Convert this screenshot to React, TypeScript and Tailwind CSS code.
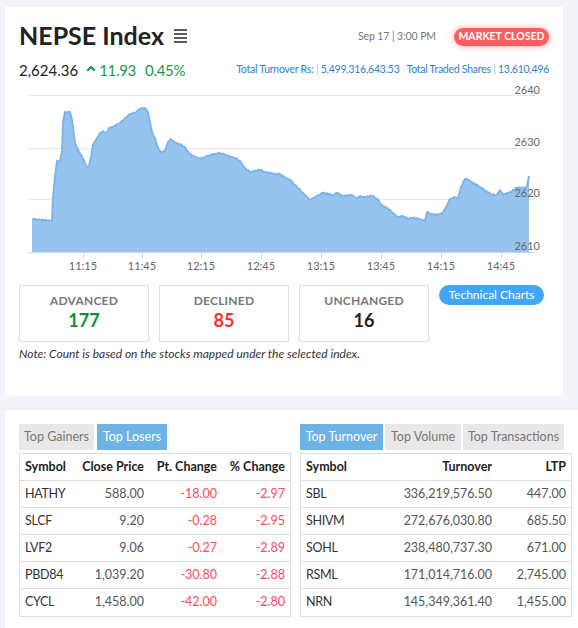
import React from "react";

const points: [number, number][] = [
  [32, 219], [52, 221], [53, 198], [55, 177], [57, 161], [60, 161], [62, 152], [63, 123], [65, 112], [70, 112],
  [72, 120], [75, 143], [78, 150], [82, 157], [87, 167], [89, 166], [91, 157], [93, 145], [97, 138], [100, 133],
  [103, 131], [106, 133], [109, 128], [115, 126], [120, 123], [125, 118], [130, 114], [135, 113], [140, 109], [145, 108],
  [148, 113], [152, 132], [155, 138], [158, 148], [161, 152], [165, 151], [168, 142], [171, 139], [175, 143], [180, 144],
  [185, 147], [189, 154], [195, 157], [200, 159], [205, 157], [210, 155], [220, 153], [225, 155], [235, 158], [240, 161],
  [245, 168], [250, 172], [260, 170], [265, 172], [275, 174], [280, 174], [285, 178], [290, 180], [295, 185], [303, 193],
  [310, 200], [317, 196], [323, 193], [333, 195], [337, 193], [343, 196], [352, 195], [357, 198], [360, 196], [365, 197],
  [372, 196], [377, 199], [382, 205], [387, 208], [393, 213], [398, 217], [403, 216], [408, 219], [413, 218], [420, 219],
  [425, 221], [427, 212], [430, 214], [438, 215], [443, 213], [447, 205], [450, 199], [455, 197], [458, 198], [461, 187],
  [465, 179], [468, 180], [473, 183], [480, 187], [487, 192], [492, 195], [497, 195], [500, 190], [503, 195], [510, 192],
  [517, 188], [523, 188], [527, 187], [529, 176],
];

// small wiggle so the line looks like tick data
const dense = (() => {
  const out: [number, number][] = [];
  for (let i = 0; i < points.length - 1; i++) {
    const [x0, y0] = points[i];
    const [x1, y1] = points[i + 1];
    const steps = Math.max(1, Math.round((x1 - x0) / 1.5));
    for (let s = 0; s < steps; s++) {
      const t = s / steps;
      const x = x0 + (x1 - x0) * t;
      let y = y0 + (y1 - y0) * t;
      if (s > 0) y += Math.sin(x * 2.3) * 0.7;
      out.push([x, y]);
    }
  }
  out.push(points[points.length - 1]);
  return out;
})();

const linePath = "M" + dense.map(([x, y]) => `${x.toFixed(1)},${y.toFixed(1)}`).join(" L");
const areaPath = `M32,252 L${dense.map(([x, y]) => `${x.toFixed(1)},${y.toFixed(1)}`).join(" L")} L529,252 Z`;

const xTicks = [
  { x: 83, t: "11:15" },
  { x: 142, t: "11:45" },
  { x: 201, t: "12:15" },
  { x: 261, t: "12:45" },
  { x: 321, t: "13:15" },
  { x: 381, t: "13:45" },
  { x: 441, t: "14:15" },
  { x: 501, t: "14:45" },
];

const yGrid = [
  { y: 95.5, ly: 94, t: "2640" },
  { y: 148.5, ly: 146, t: "2630" },
  { y: 199.5, ly: 197, t: "2620" },
];

const losers = [
  ["HATHY", "588.00", "-18.00", "-2.97"],
  ["SLCF", "9.20", "-0.28", "-2.95"],
  ["LVF2", "9.06", "-0.27", "-2.89"],
  ["PBD84", "1,039.20", "-30.80", "-2.88"],
  ["CYCL", "1,458.00", "-42.00", "-2.80"],
];

const turnover = [
  ["SBL", "336,219,576.50", "447.00"],
  ["SHIVM", "272,676,030.80", "685.50"],
  ["SOHL", "238,480,737.30", "671.00"],
  ["RSML", "171,014,716.00", "2,745.00"],
  ["NRN", "145,349,361.40", "1,455.00"],
];

const Chart = () => (
  <svg width={530} height={205} viewBox="19 80 530 205" className="block">
    {yGrid.map((g) => (
      <line key={g.t} x1={28} x2={535} y1={g.y} y2={g.y} stroke="#e6e6e6" strokeWidth={1} />
    ))}
    <path d={areaPath} fill="#96c4ee" />
    <path d={linePath} fill="none" stroke="#7cb5ec" strokeWidth={2} strokeLinejoin="round" />
    <line x1={28} x2={535} y1={252.5} y2={252.5} stroke="#ccd6eb" strokeWidth={1} />
    {xTicks.map((k) => (
      <g key={k.t}>
        <line x1={k.x + 0.5} x2={k.x + 0.5} y1={252} y2={259} stroke="#ccd6eb" strokeWidth={1} />
        <text x={k.x} y={270} textAnchor="middle" fontSize={11} fill="#666" fontFamily="Lato, sans-serif">
          {k.t}
        </text>
      </g>
    ))}
    {[...yGrid, { y: 252, ly: 250, t: "2610" }].map((g) => (
      <text key={g.t} x={540} y={g.ly} textAnchor="end" fontSize={11} fill="#666" fontFamily="Lato, sans-serif">
        {g.t}
      </text>
    ))}
  </svg>
);

const StatBox = ({ label, value, color }: { label: string; value: string; color: string }) => (
  <div className="w-[130px] h-[57px] border border-[#e0e0e0] flex flex-col items-center pt-[7px]">
    <div className="text-[12px] leading-[16px] font-bold text-[#777] tracking-[0.2px]">{label}</div>
    <div className={`text-[18px] leading-[22px] font-bold ${color}`}>{value}</div>
  </div>
);

const Tab = ({ label, active, w }: { label: string; active?: boolean; w: string }) => (
  <div
    className={`${w} h-[26px] flex items-center justify-center text-[12.5px] whitespace-nowrap ${
      active ? "bg-[#6db3e6] text-white" : "bg-[#e8e8e8] text-[#777]"
    }`}
  >
    {label}
  </div>
);

export default function App() {
  return (
    <div className="w-[578px] h-[628px] overflow-hidden bg-[#f2f3f8] pt-[7px] pl-[5px] [font-family:Lato,sans-serif] text-[#333]">
      {/* INDEX CARD */}
      <div className="w-[558px] h-[389px] bg-white px-[14px] pt-[13px]">
        <div className="flex items-center justify-between h-[30px]">
          <div className="flex items-center">
            <span className="text-[25px] leading-[30px] font-bold text-[#222]">NEPSE Index</span>
            <svg width="13" height="14" viewBox="0 0 13 14" className="ml-[10px] mt-[1px]">
              {[1, 5, 9, 13].map((y) => (
                <line key={y} x1="0" x2="13" y1={y} y2={y} stroke="#333" strokeWidth="1.6" />
              ))}
            </svg>
          </div>
          <div className="flex items-center gap-[18px] mt-[4px]">
            <span className="text-[10.5px] text-[#777] tracking-[-0.1px]">Sep 17 | 3:00 PM</span>
            <span className="w-[95px] h-[18px] rounded-full bg-[#ff5c5f] text-white text-[10.5px] font-bold flex items-center justify-center shadow-[0_0_6px_rgba(255,80,80,0.55)]">
              MARKET CLOSED
            </span>
          </div>
        </div>
        <div className="flex items-center justify-between h-[20px] mt-[10px]">
          <div className="flex items-center text-[15px] leading-[20px]">
            <span className="text-[#222]">2,624.36</span>
            <svg width="10" height="7" viewBox="0 0 10 7" className="ml-[8px] mr-[3px] -mt-[3px]">
              <path d="M1.2 5.8 L5 2 L8.8 5.8" fill="none" stroke="#179c48" strokeWidth="2.2" />
            </svg>
            <span className="text-[#179c48] tracking-[-0.3px]">11.93</span>
            <span className="text-[#179c48] ml-[9px] tracking-[-0.3px]">0.45%</span>
          </div>
          <div className="text-[10.5px] tracking-[-0.25px] text-[#2f7fcb] flex items-center whitespace-nowrap">
            <span>
              Total Turnover Rs: <span className="text-[#8fc6f0]">|</span> 5,499,316,643.53
            </span>
            <span className="ml-[7px]">
              Total Traded Shares <span className="text-[#8fc6f0]">|</span> 13,610,496
            </span>
          </div>
        </div>
        <Chart />
        <div className="flex items-start gap-[10px]">
          <StatBox label="ADVANCED" value="177" color="text-[#0e8f3c]" />
          <StatBox label="DECLINED" value="85" color="text-[#ff3030]" />
          <StatBox label="UNCHANGED" value="16" color="text-[#222]" />
          <button className="w-[105px] h-[20px] rounded-full bg-[#42a5f5] text-white text-[12px] flex items-center justify-center">
            Technical Charts
          </button>
        </div>
        <p className="mt-[4px] text-[12px] leading-[16px] italic text-[#333]">
          Note: Count is based on the stocks mapped under the selected index.
        </p>
      </div>

      {/* MOVERS CARD */}
      <div className="w-[581px] bg-white mt-[14px] px-[14px] pt-[14px] pb-[14px]">
        <div className="flex gap-[9px]">
          {/* LOSERS */}
          <div className="w-[272px]">
            <div className="flex gap-[3px]">
              <Tab label="Top Gainers" w="w-[75px]" />
              <Tab label="Top Losers" w="w-[70px]" active />
            </div>
            <div className="mt-[3px] border border-[#ddd] divide-y divide-[#ddd] text-[12.5px] whitespace-nowrap">
              <div className="h-[27px] flex items-center font-bold text-[#222] text-[12.5px]">
                <div className="w-[58px] pl-[5px]">Symbol</div>
                <div className="w-[72px] pr-[6px] text-right">Close Price</div>
                <div className="w-[73px] pr-[6px] text-right">Pt. Change</div>
                <div className="w-[67px] pr-[5px] text-right">% Change</div>
              </div>
              {losers.map((r) => (
                <div key={r[0]} className="h-[27px] flex items-center">
                  <div className="w-[58px] pl-[5px] text-[#333] tracking-[-0.3px]">{r[0]}</div>
                  <div className="w-[72px] pr-[6px] text-right text-[#555]">{r[1]}</div>
                  <div className="w-[73px] pr-[6px] text-right text-[#ff4a5a]">{r[2]}</div>
                  <div className="w-[67px] pr-[5px] text-right text-[#ff4a5a]">{r[3]}</div>
                </div>
              ))}
            </div>
          </div>
          {/* TURNOVER */}
          <div className="w-[272px]">
            <div className="flex gap-[2px]">
              <Tab label="Top Turnover" w="w-[83px]" active />
              <Tab label="Top Volume" w="w-[76px]" />
              <Tab label="Top Transactions" w="w-[101px]" />
            </div>
            <div className="mt-[3px] border border-[#ddd] divide-y divide-[#ddd] text-[12.5px] whitespace-nowrap">
              <div className="h-[27px] flex items-center font-bold text-[#222] text-[12.5px]">
                <div className="w-[80px] pl-[5px]">Symbol</div>
                <div className="w-[117px] pr-[6px] text-right">Turnover</div>
                <div className="w-[73px] pr-[5px] text-right">LTP</div>
              </div>
              {turnover.map((r) => (
                <div key={r[0]} className="h-[27px] flex items-center">
                  <div className="w-[80px] pl-[5px] text-[#333] tracking-[-0.3px]">{r[0]}</div>
                  <div className="w-[117px] pr-[6px] text-right text-[#555]">{r[1]}</div>
                  <div className="w-[73px] pr-[5px] text-right text-[#555]">{r[2]}</div>
                </div>
              ))}
            </div>
          </div>
        </div>
      </div>
    </div>
  );
}
